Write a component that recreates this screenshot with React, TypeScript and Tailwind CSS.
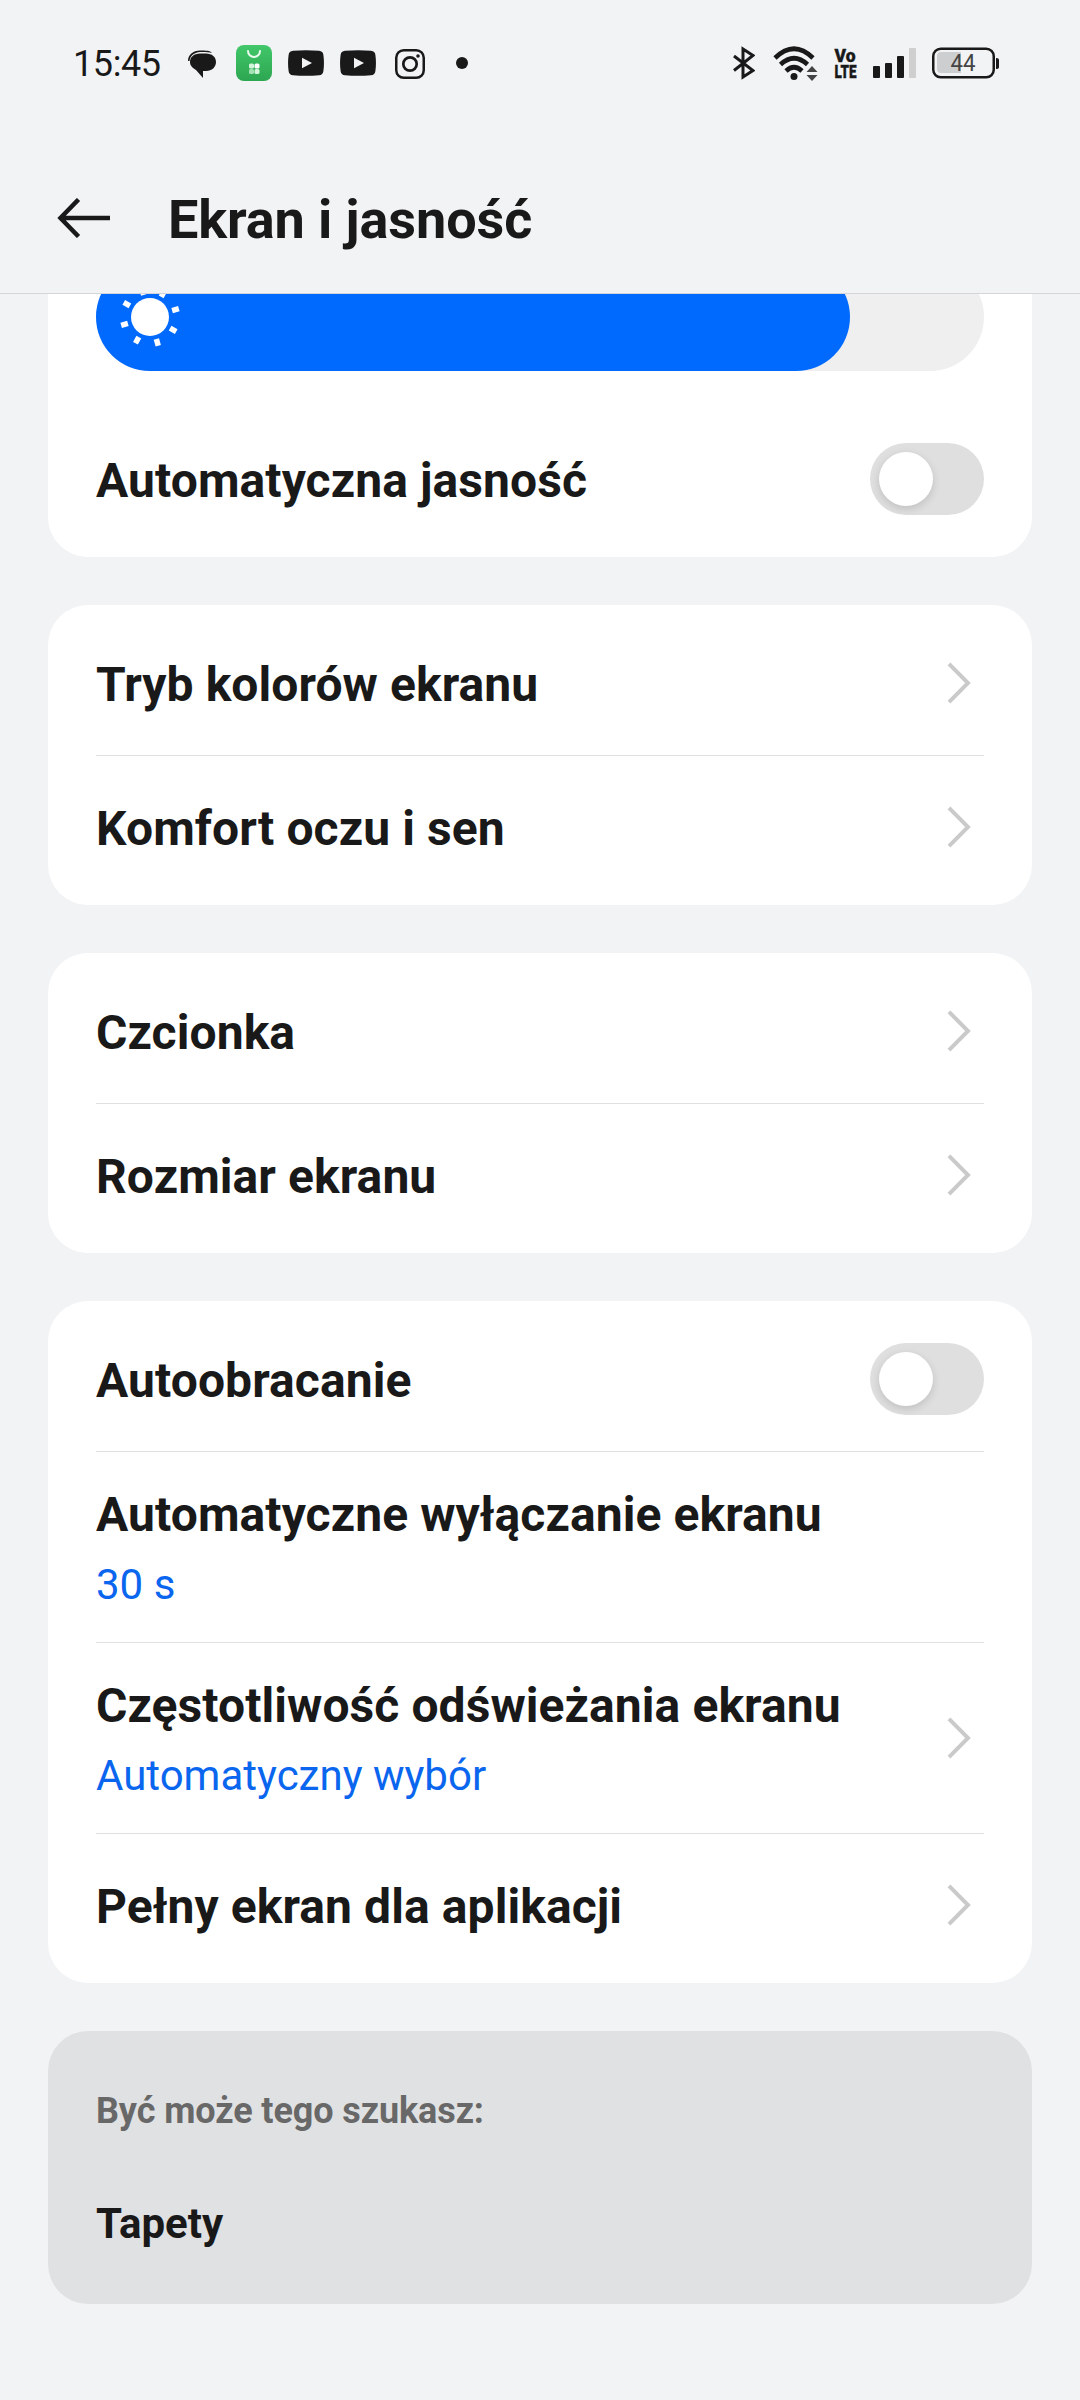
import React from 'react';

function StatusBar() {
  return (
    <div className="flex h-[127px] items-start justify-between pl-[73px] pr-[81px] pt-[35px] text-[#191919]">
      <div className="flex h-14 items-center">
        <span className="w-[115px] pt-[2px] text-[36px] leading-none tracking-[-0.4px]">15:45</span>
        <svg className="mt-[2px] h-7 w-7" viewBox="0 0 28 28">
          <path d="M0 11C0 5 5 .5 12 .5C18 .5 22 .5 24 3C20 1.800 16 2 12 2C6 2.500 2 6 1.500 11Z" fill="#191919" />
          <path d="M12 3.500H18C24 3.500 28 7 28 12C28 17 24 21 18 21H15V28L8 20C5 18 2 16 2 12C2 7 6 3.500 12 3.500Z" fill="#191919" />
        </svg>
        <svg className="ml-5 h-9 w-9" viewBox="0 0 36 36">
          <defs>
            <linearGradient id="store" x1="0" y1="0" x2="0" y2="1">
              <stop offset="0" stopColor="#42c76a" />
              <stop offset="1" stopColor="#2da651" />
            </linearGradient>
          </defs>
          <rect width="36" height="36" rx="8" fill="url(#store)" />
          <path d="M12 6a6 6 0 0 0 12 0" fill="none" stroke="#e9fbee" strokeWidth="2" strokeLinecap="round" />
          <rect x="13" y="18.500" width="5" height="5" rx="1.600" fill="#d3f5dc" />
          <rect x="18.500" y="18.500" width="5" height="5" rx="1.600" fill="#fff" />
          <rect x="13" y="24" width="5" height="5" rx="1.600" fill="#a5e3b7" />
          <rect x="18.500" y="24" width="5" height="5" rx="1.600" fill="#d3f5dc" />
        </svg>
        <YouTube />
        <YouTube />
        <svg className="ml-[19px] mt-[2px] h-[30px] w-[30px]" viewBox="0 0 30 30" fill="none" stroke="#191919">
          <rect x="1.250" y="1.250" width="27.500" height="27.500" rx="7.500" strokeWidth="2.500" />
          <circle cx="15" cy="15" r="6.700" strokeWidth="2.700" />
          <circle cx="23" cy="7" r="1.800" fill="#191919" stroke="none" />
        </svg>
        <span className="ml-[31px] h-3 w-3 rounded-full bg-[#191919]" />
      </div>
      <div className="flex h-14 items-center">
        <svg className="h-[34px] w-[22px]" viewBox="0 0 22 34" fill="none" stroke="#191919" strokeWidth="3">
          <path d="M1 10L20 24.500L10 31V3L20 9.500L1 24.500" />
        </svg>
        <svg className="ml-[18px] h-[35px] w-[46px]" viewBox="0 0 46 35">
          <g fill="none" stroke="#191919" strokeWidth="4.600">
            <path d="M2 12Q21 -6.500 40 12" />
            <path d="M7.500 18.500Q21 6 34.500 18.500" />
            <path d="M13 25Q21 17.500 29 25" />
          </g>
          <circle cx="21" cy="30.500" r="3.500" fill="#191919" />
          <path d="M39 20L44.500 26H33.500ZM33.500 29H44.500L39 35Z" fill="#444" />
        </svg>
        <div className="ml-[15px] flex w-6 flex-col">
          <svg className="h-4 w-6 overflow-visible" viewBox="0 0 24 16" fill="#191919" stroke="#191919" strokeWidth="0.4" fontFamily="Roboto, sans-serif" fontWeight="900">
            <text x="0.500" y="14.500" fontSize="18.500" textLength="21" lengthAdjust="spacingAndGlyphs">Vo</text>
          </svg>
          <svg className="h-4 w-6 overflow-visible" viewBox="0 0 24 16" fill="#191919" stroke="#191919" strokeWidth="0.4" fontFamily="Roboto, sans-serif" fontWeight="900">
            <text x="0.500" y="15" fontSize="18.500" textLength="22" lengthAdjust="spacingAndGlyphs">LTE</text>
          </svg>
        </div>
        <div className="ml-[15px] flex h-[30px] items-end gap-[5px]">
          <span className="h-[12px] w-[7px] rounded-[1px] bg-[#191919]" />
          <span className="h-[15px] w-[7px] rounded-[1px] bg-[#191919]" />
          <span className="h-[22px] w-[7px] rounded-[1px] bg-[#191919]" />
          <span className="h-[30px] w-[7px] rounded-[1px] bg-[#cfcfd0]" />
        </div>
        <svg className="ml-4 h-8 w-[67px]" viewBox="0 0 67 32">
          <rect x="1.250" y="1.750" width="60.500" height="28.500" rx="7.500" fill="none" stroke="#191919" strokeWidth="2.500" />
          <path d="M9 5H29V26H9Q5 26 5 22V9Q5 5 9 5Z" fill="#cdcecf" />
          <path d="M64 11Q67 11 67 13V20Q67 22 64 22Z" fill="#191919" />
          <text x="18.500" y="24" fontSize="23" fill="#444" fontFamily="Roboto, sans-serif" textLength="25" lengthAdjust="spacingAndGlyphs">44</text>
        </svg>
      </div>
    </div>
  );
}

function YouTube() {
  return (
    <svg className="ml-4 h-[26px] w-9" viewBox="0 0 36 26">
      <path d="M5 .7Q18 -.4 31 .7Q35 1 35.400 5Q36.500 13 35.400 21Q35 25 31 25.300Q18 26.400 5 25.300Q1 25 .6 21Q-.5 13 .6 5Q1 1 5 .7Z" fill="#191919" />
      <path d="M14 7.700L24 13L14 18.300Z" fill="#f2f3f5" />
    </svg>
  );
}

function Header() {
  return (
    <header className="flex h-[167px] items-center border-b border-[#d3d5d8] pl-[57px] pt-[16px]">
      <svg className="h-10 w-[54px]" viewBox="0 0 54 40" fill="none" stroke="#191919" strokeWidth="4.500">
        <path d="M21.500 1.500L3.500 20L21.500 38.500M3.500 20H53" />
      </svg>
      <h1 className="ml-[57px] pt-[3px] text-[54px] font-bold leading-none tracking-[-0.1px]">Ekran i jasność</h1>
    </header>
  );
}

const rays = [0, 45, 90, 135, 180, 225, 270, 315];

function BrightnessSlider() {
  return (
    <div className="-mt-[31px] h-[108px] overflow-hidden rounded-[54px] bg-[#efefef]">
      <div className="h-full w-[754px] rounded-r-[54px] bg-[#006aff] pl-[23px] pt-[23px]">
        <svg className="h-[62px] w-[62px]" viewBox="-31 -31 62 62" fill="#fff">
          <circle r="19" />
          {rays.map((ray) => (
            <rect key={ray} x="-2.750" y="23" width="5.500" height="7" transform={`rotate(${ray - 16})`} />
          ))}
        </svg>
      </div>
    </div>
  );
}

function Toggle() {
  return (
    <div className="h-[72px] w-[114px] rounded-full bg-[#dfdfdf] p-[9px]">
      <div className="h-[54px] w-[54px] rounded-full bg-white shadow-[0_3px_8px_rgba(0,0,0,0.14)]" />
    </div>
  );
}

function Chevron() {
  return (
    <svg className="mr-[13px] h-[42px] w-[24px]" viewBox="0 0 24 42" fill="none" stroke="#cacaca" strokeWidth="4">
      <path d="M2 1.800L21 21L2 40.200" />
    </svg>
  );
}

function Card({ children }: { children: React.ReactNode }) {
  return (
    <section className="rounded-[40px] bg-white px-12 py-[6px] [&>*+*]:border-t [&>*+*]:border-[#e0e0e0] [&>*+*]:pb-px">
      {children}
    </section>
  );
}

type RowProps = {
  title: string;
  value?: string;
  right?: React.ReactNode;
};

function Row({ title, value, right }: RowProps) {
  return (
    <div className={value ? 'flex h-[191px] items-center justify-between' : 'flex h-[144px] items-center justify-between'}>
      <div className="pt-[3px]">
        <div className="text-[48px] font-bold leading-[56px] tracking-[0.08px]">{title}</div>
        {value && <div className="-mb-1 mt-[14px] text-[42px] leading-[56px] text-[#0a66ee]">{value}</div>}
      </div>
      {right}
    </div>
  );
}

export default function App() {
  return (
    <div className="h-[2400px] w-[1080px] overflow-hidden bg-[#f2f3f5] font-['Roboto',sans-serif] text-[#191919]">
      <StatusBar />
      <Header />
      <main className="flex flex-col gap-12 px-12">
        <section className="h-[263px] overflow-hidden rounded-b-[40px] bg-white px-12">
          <BrightnessSlider />
          <div className="mt-[36px]">
            <Row title="Automatyczna jasność" right={<Toggle />} />
          </div>
        </section>
        <Card>
          <Row title="Tryb kolorów ekranu" right={<Chevron />} />
          <Row title="Komfort oczu i sen" right={<Chevron />} />
        </Card>
        <Card>
          <Row title="Czcionka" right={<Chevron />} />
          <Row title="Rozmiar ekranu" right={<Chevron />} />
        </Card>
        <Card>
          <Row title="Autoobracanie" right={<Toggle />} />
          <Row title="Automatyczne wyłączanie ekranu" value="30 s" />
          <Row title="Częstotliwość odświeżania ekranu" value="Automatyczny wybór" right={<Chevron />} />
          <Row title="Pełny ekran dla aplikacji" right={<Chevron />} />
        </Card>
        <section className="h-[273px] rounded-[40px] bg-[#e0e1e3] px-12 pt-[58px]">
          <div className="text-[36px] font-bold leading-[44px] tracking-[-0.1px] text-[#686868]">Być może tego szukasz:</div>
          <div className="mt-[65px] text-[42px] font-bold leading-[52px]">Tapety</div>
        </section>
      </main>
    </div>
  );
}
